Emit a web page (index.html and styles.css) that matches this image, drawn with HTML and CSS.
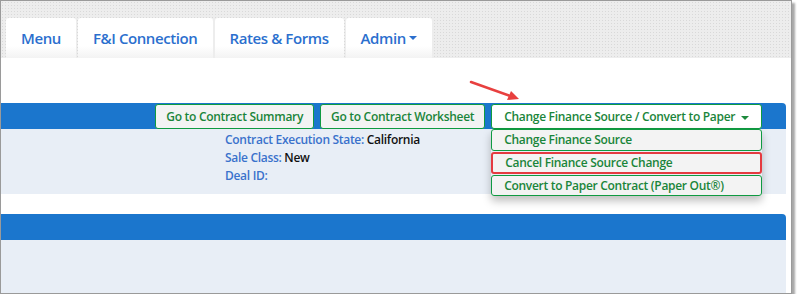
FILE: index.html
```html
<!DOCTYPE html>
<html>
<head>
    <title>Change Finance Source</title>
    <link rel="stylesheet" href="styles.css">
</head>
<body>
<div class="frame">
    <!-- top tabs -->
    <nav class="topnav">
        <a class="tab">Menu</a>
        <a class="tab">F&amp;I Connection</a>
        <a class="tab">Rates &amp; Forms</a>
        <a class="tab">Admin<span class="caret"></span></a>
    </nav>

    <div class="content">
        <section class="block">
            <div class="bar">
                <button class="btn">Go to Contract Summary</button>
                <button class="btn">Go to Contract Worksheet</button>
                <div class="dropwrap">
                    <button class="btn btn-open">Change Finance Source / Convert to Paper <span class="caret"></span></button>
                    <ul class="dropmenu">
                        <li>Change Finance Source</li>
                        <li class="marked">Cancel Finance Source Change</li>
                        <li>Convert to Paper Contract (Paper Out&reg;)</li>
                    </ul>
                </div>
            </div>
            <div class="panel info">
                <p><span class="lbl">Contract Execution State:</span> California</p>
                <p><span class="lbl">Sale Class:</span> New</p>
                <p><span class="lbl">Deal ID:</span></p>
            </div>
        </section>

        <section class="block">
            <div class="bar"></div>
            <div class="panel"></div>
        </section>
    </div>

    <!-- annotation arrow -->
    <svg class="arrow" width="60" height="30" viewBox="0 0 60 30">
        <line x1="2" y1="2" x2="44" y2="17" stroke="#e8403f" stroke-width="2.5" stroke-linecap="round"/>
        <polygon points="50,19 38,20 42,11" fill="#e8403f"/>
    </svg>
</div>
</body>
</html>
```

FILE: styles.css
```css
body {
    margin: 0;
    font-family: "Open Sans", "Liberation Sans", sans-serif;
    background: white;
}

/* the framed screenshot */
.frame {
    position: relative;
    width: 790px;
    height: 292px;
    border: 1px solid #9a9a9a;
    box-shadow: 3px 3px 2px #a8a8a8;
    overflow: hidden;
    background: white;
}

.topnav {
    display: flex;
    gap: 2px;
    height: 57px;
    padding: 17px 0 0 5px;
    box-sizing: border-box;
    background-color: #ededed;
    background-image: radial-gradient(#d9d9d9 0.6px, transparent 0.7px);
    background-size: 3px 3px;
}

.tab {
    display: flex;
    align-items: center;
    gap: 2px;
    height: 40px;
    padding: 0 15px;
    box-sizing: border-box;
    background: linear-gradient(#ffffff 70%, #f3f3f3);
    border-radius: 3px 3px 0 0;
    color: #2b6fce;
    font-size: 15px;
    font-weight: 600;
    letter-spacing: -0.4px;
}

.tab .caret {
    border-top-color: #2b6fce;
    margin-left: 1px;
}

.caret {
    display: inline-block;
    width: 0;
    height: 0;
    border-left: 4px solid transparent;
    border-right: 4px solid transparent;
    border-top: 4px solid #1d8a3d;
    vertical-align: middle;
    margin-left: 3px;
}

.content {
    padding: 45px 5px 0 0;
}

.block + .block {
    margin-top: 20px;
}

.bar {
    display: flex;
    justify-content: flex-end;
    gap: 6px;
    height: 26px;
    padding: 1px 24px 0 0;
    box-sizing: border-box;
    background: #1b76cd;
    border-radius: 0 4px 0 0;
}

.btn {
    height: 25px;
    padding: 0 10px;
    background: #f3f3f3;
    border: 1.5px solid #0f9a41;
    border-radius: 3px;
    color: #1a853a;
    font-family: inherit;
    font-size: 12px;
    font-weight: 600;
    letter-spacing: -0.3px;
}

.btn-open {
    background: white;
    padding: 0 12px;
}

.dropwrap {
    position: relative;
}

.dropmenu {
    position: absolute;
    top: 25px;
    left: 0;
    right: 0;
    margin: 0;
    padding: 0;
    list-style: none;
    box-shadow: 0 5px 8px rgba(0, 0, 0, 0.25);
    border-radius: 3px;
    z-index: 2;
}

.dropmenu li {
    height: 22px;
    line-height: 19px;
    margin-bottom: 1px;
    padding-left: 12px;
    box-sizing: border-box;
    background: #f3f3f3;
    border: 1.5px solid #0f9a41;
    border-radius: 3px;
    color: #1a853a;
    font-size: 12px;
    font-weight: 600;
    letter-spacing: -0.3px;
}

.dropmenu li:last-child {
    margin-bottom: 0;
    height: 21px;
}

.dropmenu li.marked {
    border: 2px solid #e53a40;
    line-height: 18px;
}

.panel {
    height: 65px;
    background: #e8eef6;
}

.block + .block .panel {
    height: 60px;
}

.info {
    padding: 2px 0 0 224px;
    box-sizing: border-box;
    font-size: 12px;
    font-weight: 600;
    letter-spacing: -0.3px;
    color: #111;
}

.info p {
    margin: 0;
    height: 18px;
    line-height: 18px;
}

.lbl {
    color: #3a72cc;
}

.arrow {
    position: absolute;
    left: 468px;
    top: 79px;
}
```
